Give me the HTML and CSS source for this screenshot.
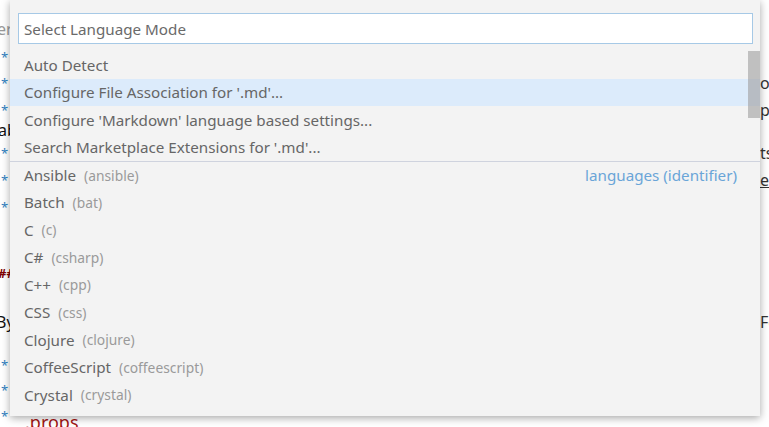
FILE: index.html
```html
<!DOCTYPE html>
<html>
<head>
<meta charset="utf-8">
<link rel="stylesheet" href="styles.css">
</head>
<body>
<div class="editor">
  <div class="sp"></div><div></div><div></div>
  <div class="l"><span class="ph">er</span></div><div></div><div class="r"></div>
  <div class="l"><span class="star">*</span></div><div></div><div class="r"></div>
  <div class="l"><span class="star">*</span></div><div></div><div class="r">ou</div>
  <div class="l"><span class="star">*</span></div><div></div><div class="r">pe</div>
  <div class="l"><span class="bk">ab</span></div><div></div><div class="r"></div>
  <div class="l"><span class="star">*</span></div><div></div><div class="r">ts</div>
  <div class="l"><span class="star">*</span></div><div></div><div class="r"><u>e</u></div>
  <div class="l"><span class="star">*</span></div><div></div><div class="r"></div>
  <div class="sp"></div><div></div><div></div>
  <div class="l"><span class="hd">##</span></div><div></div><div class="r"></div>
  <div class="sp"></div><div></div><div></div>
  <div class="l"><span class="by">By</span></div><div></div><div class="r">Fo</div>
  <div class="sp"></div><div></div><div></div>
  <div class="l"><span class="star">*</span></div><div></div><div class="r"></div>
  <div class="l"><span class="star">*</span></div><div></div><div class="r"></div>
  <div class="l"><span class="star">*</span></div><div class="mid"><span class="prop">.props</span></div><div class="r"></div>
</div>

<div class="picker">
  <div class="inputwrap">
    <div class="input">Select Language Mode</div>
  </div>
  <div class="list">
    <div class="row"><span class="label">Auto Detect</span></div>
    <div class="row focus"><span class="label">Configure File Association for '.md'...</span></div>
    <div class="row"><span class="label">Configure 'Markdown' language based settings...</span></div>
    <div class="row"><span class="label">Search Marketplace Extensions for '.md'...</span></div>
    <div class="row sep"><span class="label">Ansible</span><span class="desc">(ansible)</span><span class="group">languages (identifier)</span></div>
    <div class="row"><span class="label">Batch</span><span class="desc">(bat)</span></div>
    <div class="row"><span class="label">C</span><span class="desc">(c)</span></div>
    <div class="row"><span class="label">C#</span><span class="desc">(csharp)</span></div>
    <div class="row"><span class="label">C++</span><span class="desc">(cpp)</span></div>
    <div class="row"><span class="label">CSS</span><span class="desc">(css)</span></div>
    <div class="row"><span class="label">Clojure</span><span class="desc">(clojure)</span></div>
    <div class="row"><span class="label">CoffeeScript</span><span class="desc">(coffeescript)</span></div>
    <div class="row"><span class="label">Crystal</span><span class="desc">(crystal)</span></div>
    <div class="scrollbar"></div>
  </div>
</div>
</body>
</html>
```

FILE: styles.css
```css
html, body {
  margin: 0;
  padding: 0;
  width: 769px;
  height: 427px;
  overflow: hidden;
  background: #ffffff;
}

body {
  position: relative;
  font-family: "Noto Sans", "Open Sans", sans-serif;
}

.editor {
  display: grid;
  grid-template-columns: 10px 750px 9px;
  grid-template-rows: 15px 28px 28px 24px 30px 10px 36px 18px 36px 35px 26px 23px 26px 17px 26px 24px 28px;
  font-size: 16px;
  color: #333;
}

.editor > div {
  display: flex;
  align-items: center;
  white-space: nowrap;
  overflow: visible;
}

.l {
  justify-content: flex-start;
}

.r {
  overflow: hidden;
  color: #333;
}

.ph { color: #999; margin-left: -3px; }
.star { color: #2f7fc1; margin-left: 1px; font-size: 13px; }
.bk { color: #111; margin-left: -2px; }
.by { color: #111; margin-left: -4px; }
.hd { color: #800000; font-weight: bold; margin-left: -2px; font-size: 13px; }
.prop { color: #a31515; margin-left: 15px; margin-top: 12px; font-size: 18px; }

.picker {
  position: absolute;
  left: 10px;
  top: 0;
  width: 750px;
  height: 416px;
  background: #f3f3f3;
  box-shadow: 0 2px 8px rgba(0, 0, 0, 0.35);
  color: #666666;
  font-size: 15.2px;
}

.inputwrap {
  padding: 13px 7px 7px 8px;
}

.input {
  height: 29px;
  background: #ffffff;
  border: 1px solid #a6c9e6;
  display: flex;
  align-items: center;
  padding-left: 5px;
  color: #6a6a6a;
  font-size: 15.2px;
}

.list {
  position: relative;
}

.row {
  height: 27.5px;
  display: flex;
  align-items: center;
  padding-left: 14px;
  padding-right: 23px;
  box-sizing: border-box;
  white-space: nowrap;
}

.row.focus {
  background: #dcebfb;
}

.row.sep {
  border-top: 1px solid #cfd3de;
}

.desc {
  margin-left: 8px;
  font-size: 13.8px;
  color: #9a9a9a;
}

.group {
  margin-left: auto;
  color: #6aa5d8;
}

.scrollbar {
  position: absolute;
  right: 0;
  top: 0;
  width: 12px;
  height: 67px;
  background: rgba(160, 160, 160, 0.62);
}
```
